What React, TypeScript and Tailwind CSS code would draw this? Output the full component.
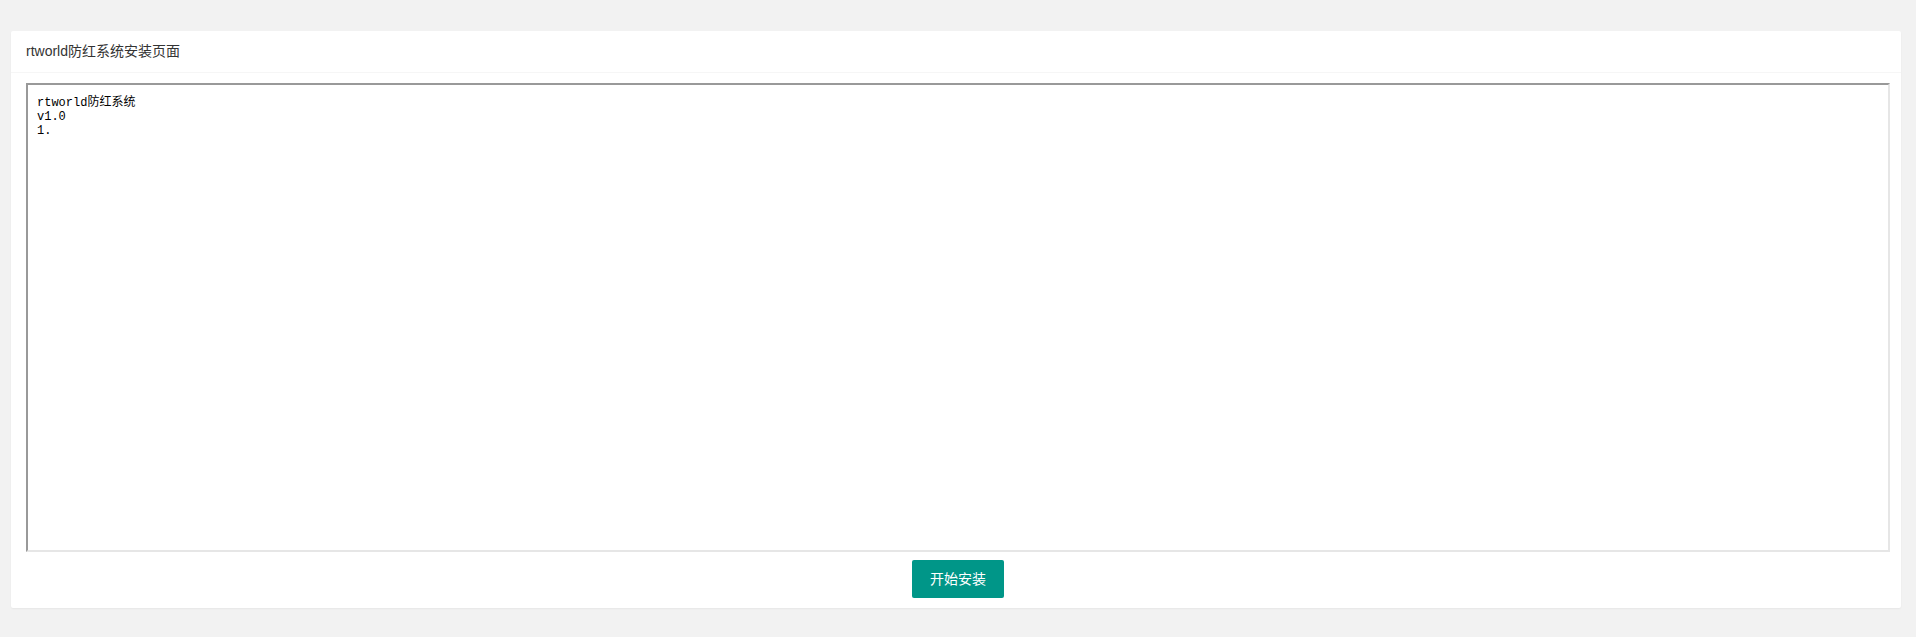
export default function App() {
  const notes = "rtworld防红系统\nv1.0\n1.";
  return (
    <div
      className="min-h-screen w-full bg-[#f2f2f2] pt-[31px] pl-[11px] pr-[15px]"
      style={{ fontFamily: '"Liberation Sans", "Noto Sans CJK SC", sans-serif' }}
    >
      <div className="rounded-[2px] bg-white shadow-[0_1px_2px_0_rgba(0,0,0,0.05)]">
        <div className="flex h-[42px] items-center border-b border-[#f6f6f6] px-[15px] text-[14px] text-[#333]">
          rtworld防红系统安装页面
        </div>
        <div className="flex flex-col items-center pt-[10px] pb-[10px] pl-[15px] pr-[11px]">
          <textarea
            readOnly
            defaultValue={notes}
            className="block h-[469px] w-full resize-none border-2 border-solid border-t-[#999] border-l-[#999] border-r-[#e6e6e6] border-b-[#e6e6e6] bg-white pt-[11px] pl-[9px] pr-[10px] pb-[10px] text-[12px] leading-[14px] text-black outline-none"
            style={{ fontFamily: '"Liberation Mono", "Noto Sans CJK SC", monospace' }}
          />
          <button className="mt-[8px] h-[38px] w-[92px] rounded-[2px] bg-[#009688] text-[14px] text-white">
            开始安装
          </button>
        </div>
      </div>
    </div>
  );
}
